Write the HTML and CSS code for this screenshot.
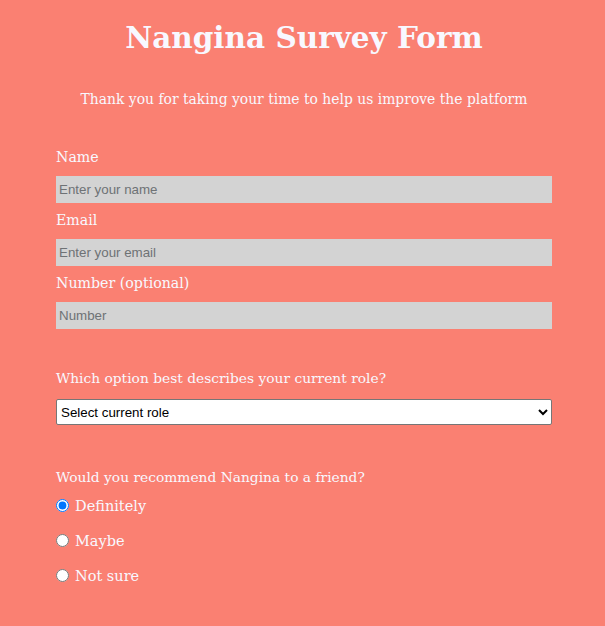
FILE: index.html
```html
<!DOCTYPE html>
<html>
<head>
<meta charset="utf-8">
<link rel="stylesheet" href="styles.css">
</head>
<body>
<h1 class="title">Nangina Survey Form</h1>
<p class="subtitle">Thank you for taking your time to help us improve the platform</p>
<form class="survey">
  <label class="field-label" for="name">Name</label>
  <input class="text-input" id="name" type="text" placeholder="Enter your name">
  <label class="field-label" for="email">Email</label>
  <input class="text-input" id="email" type="email" placeholder="Enter your email">
  <label class="field-label" for="number">Number (optional)</label>
  <input class="text-input" id="number" type="number" placeholder="Number">

  <p class="question">Which option best describes your current role?</p>
  <select class="role-select">
    <option>Select current role</option>
  </select>

  <p class="question question-gap">Would you recommend Nangina to a friend?</p>
  <label class="radio-row"><input type="radio" name="rec" checked> Definitely</label>
  <label class="radio-row"><input type="radio" name="rec"> Maybe</label>
  <label class="radio-row"><input type="radio" name="rec"> Not sure</label>
</form>
</body>
</html>
```
FILE: styles.css
```css
html, body {
  background: #fa8072;
}
body {
  margin: 0 8px 0 11px;
  font-family: "DejaVu Serif", Georgia, serif;
  color: #f8f8ff;
}
.title {
  margin: 0;
  padding-top: 18px;
  text-align: center;
  font-size: 29.5px;
  line-height: 40px;
  font-weight: bold;
}
.subtitle {
  margin: 31px 0 0;
  text-align: center;
  font-size: 13.9px;
  line-height: 20px;
}
.survey {
  width: 496px;
  margin: 38px auto 0;
  display: flex;
  flex-direction: column;
}
.field-label {
  display: block;
  font-size: 14.2px;
  line-height: 20px;
  margin: 0 0 9px;
}
.field-label + .text-input + .field-label {
  margin-top: 7px;
}
.text-input {
  box-sizing: border-box;
  width: 100%;
  height: 27px;
  border: none;
  background: #d3d3d3;
  padding: 0 3px;
  font-family: "Liberation Sans", Arial, sans-serif;
  font-size: 13.33px;
  margin: 0;
}
.text-input::placeholder {
  color: #6e7275;
}
.question {
  margin: 39px 0 11px;
  font-size: 13.8px;
  line-height: 20px;
}
.question-gap {
  margin-top: 42px;
  margin-bottom: 1px;
}
.role-select {
  box-sizing: border-box;
  width: 100%;
  height: 26px;
  margin: 0;
  font-family: "Liberation Sans", Arial, sans-serif;
  font-size: 13.33px;
  background: #fff;
  color: #000;
  border: 1px solid #767676;
  border-radius: 2px;
}
.radio-row {
  display: flex;
  align-items: center;
  gap: 6px;
  height: 35px;
  font-size: 14.5px;
}
.radio-row input {
  margin: 0;
  width: 13px;
  height: 13px;
}
```
